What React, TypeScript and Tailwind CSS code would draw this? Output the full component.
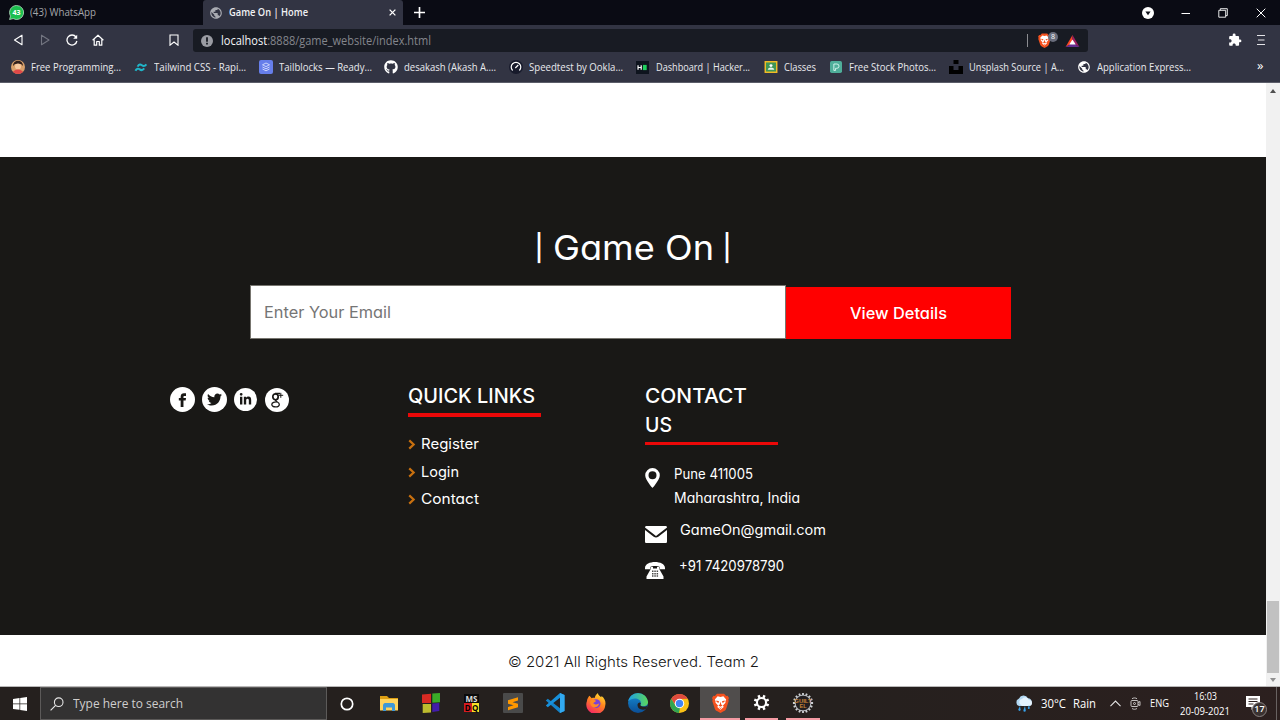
import { useLayoutEffect, useRef } from "react";
import type { ReactNode } from "react";
import { FaGithub, FaTwitter, FaLinkedinIn } from "react-icons/fa";
import { MdPublic, MdExtension } from "react-icons/md";

type FitProps = { w: number; className?: string; children: ReactNode };

/* Single line of text whose glyphs are stretched so it spans exactly `w` pixels. */
function Fit({ w, className = "", children }: FitProps) {
  const ref = useRef<HTMLSpanElement>(null);
  useLayoutEffect(() => {
    const fit = () => {
      const el = ref.current;
      if (!el || !el.offsetWidth) return;
      el.style.transform = "none";
      el.style.transform = `scaleX(${w / el.getBoundingClientRect().width})`;
    };
    fit();
    document.fonts?.ready.then(fit);
  }, [w]);
  return (
    <span className={`block shrink-0 whitespace-nowrap text-left ${className}`} style={{ width: w }}>
      <span ref={ref} className="inline-block origin-left">{children}</span>
    </span>
  );
}

function BraveLion({ className }: { className: string }) {
  return (
    <svg viewBox="0 0 24 28" className={className}>
      <path d="M7 1h10l3 3 2-.3L24 7l-1 2 .6 2-3.6 11c-.5 1.600-1.700 2.500-3 3.300L12 28l-5-2.700c-1.300-.8-2.500-1.700-3-3.300L.4 11 1 9 0 7l2-3.300L4 4z" fill="#f4511e" />
      <path d="M12 5.500l4-1 4 4.500-1 2.500 0 2-3.500 4 1 2-4.500 4-4.500-4 1-2L5 13.500v-2L4 9l4-4.500z" fill="#fff" />
      <path d="M6 10.500l4 1.200-1 2.300-2.700-1.600zM18 10.500l-4 1.200 1 2.300 2.700-1.600zM12 12l1 4 2 1.500-3 1.800-3-1.800 2-1.500zM9.500 19.800L12 21l2.500-1.200L12 22.500z" fill="#f4511e" />
    </svg>
  );
}

function Bookmark({ icon, w, tw, children }: { icon: ReactNode; w: string; tw: number; children: string }) {
  return (
    <div className={`flex shrink-0 items-center ${w}`}>
      <span className="flex w-5 shrink-0">{icon}</span>
      <Fit w={tw} className="text-[11px] text-[#e9eaee]">{children}</Fit>
    </div>
  );
}

function TabStrip() {
  return (
    <div className="flex h-[25px] items-center bg-[#0a0b14]">
      <div className="flex h-full w-[203px] items-center pl-[9px]">
        <svg viewBox="0 0 16 16" className="mr-[6px] size-[15px]">
          <path d="M8 .5a7.500 7.500 0 1 1-3.600 14L.6 15.500l1-3.700A7.500 7.500 0 0 1 8 .5z" fill="#1dbf4f" stroke="#d7f6df" strokeWidth=".7" />
          <text x="8" y="10.800" fontSize="7.500" fontWeight="700" textAnchor="middle" fill="#fff" fontFamily="Open Sans">43</text>
        </svg>
        <Fit w={66} className="text-[11px] text-[#a5a6aa]">(43) WhatsApp</Fit>
      </div>
      <div className="flex h-full w-[200px] items-center rounded-t-[3px] bg-[#323443] pl-[6px]">
        <MdPublic className="size-[14px] text-[#a9abb2]" />
        <Fit w={79} className="ml-[6px] text-[11px] font-semibold text-[#f1f1f4]">Game On | Home</Fit>
        <svg viewBox="0 0 8 8" className="ml-[81px] size-[7px]" stroke="#fff" strokeWidth="1.500"><path d="M.7.7l6.600 6.600M7.300.7L.7 7.300" /></svg>
      </div>
      <svg viewBox="0 0 10 10" className="ml-[11px] size-[11px]" stroke="#fff" strokeWidth="1.500"><path d="M5 0v10M0 5h10" /></svg>
      <div className="ml-auto flex items-center pr-[14px]">
        <svg viewBox="0 0 12 12" className="mr-[27px] size-3"><circle cx="6" cy="6" r="6" fill="#fff" /><path d="M3.400 4.500h5.200L6 8.200z" fill="#11121b" /></svg>
        <svg viewBox="0 0 10 10" className="mr-[27px] size-[10px]" stroke="#fff"><path d="M.5 5.500h8.500" /></svg>
        <svg viewBox="0 0 10 10" className="mr-[28px] size-[10px]" fill="none" stroke="#fff" strokeWidth=".9"><path d="M.8 2.300h6.900v6.900H.8zM2.300 2.300V.7h7v6.900H7.700" /></svg>
        <svg viewBox="0 0 10 10" className="size-[10px]" stroke="#fff" strokeWidth="1"><path d="M.7.7l8.600 8.600M9.300.7L.7 9.300" /></svg>
      </div>
    </div>
  );
}

function Toolbar() {
  return (
    <div className="flex h-[30px] items-center bg-[#323443]">
      <div className="flex w-[193px] items-center pl-[13px]">
        <svg viewBox="0 0 12 12" className="size-[12px]" fill="none" stroke="#fff" strokeWidth="1.100" strokeLinejoin="round"><path d="M9 1.200v9.600L1.500 6z" /></svg>
        <svg viewBox="0 0 12 12" className="ml-[14px] size-[12px]" fill="none" stroke="#737580" strokeWidth="1.100" strokeLinejoin="round"><path d="M2.500 1.200v9.600L10 6z" /></svg>
        <svg viewBox="0 0 12 12" className="ml-[15px] size-[12px]" fill="none" stroke="#fff" strokeWidth="1.300"><path d="M10 3A5 5 0 1 0 10.900 7" /><path d="M11.200.7v4H7.200z" fill="#fff" stroke="none" /></svg>
        <svg viewBox="0 0 12 12" className="ml-[14px] size-[12px]" fill="none" stroke="#fff" strokeWidth="1.200" strokeLinejoin="round"><path d="M.6 6.200L6 1.200l5.400 5M2.200 5.500v5.700h2.500V7.500h2.600v3.700h2.500V5.500" /></svg>
        <svg viewBox="0 0 12 12" className="ml-[64px] size-[12px]" fill="none" stroke="#fff" strokeWidth="1.100"><path d="M2 1h8v10.200L6 8l-4 3.200z" /></svg>
      </div>
      <div className="mt-px flex h-[23px] w-[895px] items-center rounded-[3px] bg-[#181b23] pl-[8px]">
        <svg viewBox="0 0 12 12" className="mr-[8px] size-3"><circle cx="6" cy="6" r="6" fill="#9a9ca3" /><path d="M5.100 2.200h1.800v4.600H5.100zM5.100 7.800h1.800v1.800H5.100z" fill="#181b23" /></svg>
        <Fit w={210} className="text-[12px] text-[#84868d]"><span className="text-[#f6f6f8]">localhost</span>:8888/game_website/index.html</Fit>
        <div className="ml-[596px] h-[13px] w-px bg-[#8b8c91]" />
        <div className="relative ml-[10px] flex">
          <BraveLion className="h-[15px] w-[13px]" />
          <span className="absolute top-[-1px] left-[10px] flex size-[10px] items-center justify-center rounded-full bg-[#686c7b] text-[7px] text-white">8</span>
        </div>
        <svg viewBox="0 0 15 13" className="ml-[14px] h-[12px] w-[15px]"><path d="M7.500 0L0 13l7.500-4.500z" fill="#ff4724" /><path d="M7.500 0L15 13 7.500 8.500z" fill="#9e1f63" /><path d="M0 13h15L7.500 8.500z" fill="#662d91" /><path d="M7.500 4.800L11 10.300H4z" fill="#fff" /></svg>
      </div>
      <MdExtension className="ml-[140px] size-[14px] text-white" />
      <svg viewBox="0 0 8 12" className="ml-[15px] h-[12px] w-[8px]" stroke="#e4e4e8" strokeWidth="1.100"><path d="M0 1.500h8M1 6h6.500M0 10.500h8" /></svg>
    </div>
  );
}

function Bookmarks() {
  return (
    <div className="flex h-[28px] items-center border-b border-[#5b5d69] bg-[#323443] pb-[3px] pl-[11px]">
      <Bookmark w="w-[123px]" tw={90} icon={
        <svg viewBox="0 0 14 14" className="size-[14px]"><defs><clipPath id="face"><circle cx="7" cy="7" r="7" /></clipPath></defs><g clipPath="url(#face)"><path d="M0 0h14v14H0z" fill="#d8a06a" /><path d="M2 6c0-7 10-7 10 0L10 4H4z" fill="#31201c" /><circle cx="7" cy="6.500" r="3" fill="#f6c9a0" /><path d="M1 14c1-6 11-6 12 0z" fill="#e04848" /></g></svg>
      }>Free Programming...</Bookmark>
      <Bookmark w="w-[125px]" tw={92} icon={
        <svg viewBox="0 0 14 10" className="mt-px h-[9px] w-[14px]" fill="none" stroke="#20b5c9" strokeWidth="2.200"><path d="M3.200 4C4.800.8 6.700 1.500 8 2.500s3 1.500 5-1M.8 8.600C2.400 5.400 4.300 6.100 5.600 7.100s3 1.500 5-1" /></svg>
      }>Tailwind CSS - Rapi...</Bookmark>
      <Bookmark w="w-[125px]" tw={93} icon={
        <svg viewBox="0 0 14 14" className="size-[14px]"><rect width="14" height="14" rx="2" fill="#667eea" /><path d="M7 3l3.500 1.800L7 6.600 3.500 4.800zM3.500 7L7 8.800 10.500 7M3.500 9L7 10.800 10.500 9" fill="none" stroke="#e5eaff" strokeWidth=".8" /></svg>
      }>Tailblocks — Ready...</Bookmark>
      <Bookmark w="w-[125px]" tw={92} icon={<FaGithub className="size-[14px] text-white" />}>desakash (Akash A....</Bookmark>
      <Bookmark w="w-[127px]" tw={94} icon={
        <svg viewBox="0 0 14 14" className="size-[14px]"><circle cx="7" cy="7" r="7" fill="#171a2b" /><path d="M3.600 10.500a4.800 4.800 0 1 1 6.800 0M6.300 8l3-3" fill="none" stroke="#fff" strokeWidth="1.200" /></svg>
      }>Speedtest by Ookla...</Bookmark>
      <Bookmark w="w-[128px]" tw={94} icon={
        <svg viewBox="0 0 14 14" className="size-[13px]"><path d="M0 0h14v14H0z" fill="#0e141e" /><path d="M2.200 4.500v5M5.600 4.500v5M2.200 7h3.400" stroke="#fff" strokeWidth="1.300" /><path d="M7.500 4.200h4v5.600h-4z" fill="#1fd05e" /></svg>
      }>Dashboard | Hacker...</Bookmark>
      <Bookmark w="w-[65px]" tw={32} icon={
        <svg viewBox="0 0 14 13" className="h-[12px] w-[14px]"><path d="M0 0h14v13H0z" fill="#f1bb25" /><path d="M1.600 1.600h10.800v9.800H1.600z" fill="#3f9656" /><circle cx="7" cy="5" r="1.600" fill="#fff" /><path d="M3.500 9.500c.3-3.300 6.700-3.300 7 0z" fill="#e5f3e7" /></svg>
      }>Classes</Bookmark>
      <Bookmark w="w-[120px]" tw={87} icon={
        <svg viewBox="0 0 14 14" className="ml-px size-[12px]"><rect width="14" height="14" rx="2" fill="#4fae9a" /><path d="M4.500 11V3.500H8a2.500 2.500 0 0 1 0 5H6.500V11z" fill="none" stroke="#e3fbf5" strokeWidth="1" /></svg>
      }>Free Stock Photos...</Bookmark>
      <Bookmark w="w-[128px]" tw={95} icon={
        <svg viewBox="0 0 14 14" className="size-[14px]"><path d="M4.500 0h5v4h-5zM0 6h4.500v4h5V6H14v8H0z" fill="#000" /></svg>
      }>Unsplash Source | A...</Bookmark>
      <Bookmark w="w-[180px]" tw={94} icon={<MdPublic className="size-[14px] text-white" />}>Application Express...</Bookmark>
      <span className="-mt-1 text-[13px] leading-none text-white">»</span>
    </div>
  );
}

function SocialLinks() {
  return (
    <div className="flex h-[25px] w-[238px] items-center">
      <span className="flex size-[25px] items-center justify-center rounded-full bg-white">
        <svg viewBox="0 0 10 16" className="h-[14px] w-[9px]"><path d="M9 .3v3H7.300c-.9 0-1.200.4-1.200 1.200v1.300H9l-.4 2.900H6.100V16H2.900V8.700H.8V5.800h2.100V4C2.900 1.500 4.400.2 6.700.2z" fill="#191816" /></svg>
      </span>
      <span className="ml-[7px] flex size-[25px] items-center justify-center rounded-full bg-white text-[#191816]"><FaTwitter className="size-[15px]" /></span>
      <span className="ml-[7px] flex size-[23px] items-center justify-center rounded-full bg-white text-[#191816]"><FaLinkedinIn className="mb-px size-[13px]" /></span>
      <span className="ml-[8px] flex size-[24px] items-center justify-center rounded-full bg-white">
        <svg viewBox="0 0 14 16" className="h-[16px] w-[14px]" fill="none" stroke="#191816"><ellipse cx="5.500" cy="4.800" rx="2.700" ry="3" strokeWidth="1.700" /><path d="M5 1.500h5M6.800 7.500C3 9 9.300 9.700 9.300 12.200 9.300 15.800 1.800 15.800 1.800 12.500c0-2 3-2.700 5-2.500" strokeWidth="1.300" /><path d="M10.800.8v5M8.500 3.300h4.700" strokeWidth="1" /></svg>
      </span>
    </div>
  );
}

function QuickLink({ w, children }: { w: number; children: string }) {
  return (
    <li className="flex h-[27.700px] items-center">
      <svg viewBox="0 0 8 12" className="mt-px mr-[5px] h-[11px] w-[8px]" fill="none" stroke="#c8700f" strokeWidth="2.400"><path d="M1 1.500L5.800 6 1 10.500" /></svg>
      <Fit w={w} className="text-[14.500px]">{children}</Fit>
    </li>
  );
}

function Page() {
  return (
    <main className="w-[1266px] bg-white font-[Inter,sans-serif] [font-feature-settings:'cv11']">
      <div className="h-[73.500px]" />
      <footer className="h-[478.500px] bg-[#191816] pt-[66px] text-white">
        <h1 className="flex h-[50px] items-center justify-center text-[34px] leading-none">
          <span className="mr-[9px] text-[26px] font-medium">|</span>
          <Fit w={161}>Game On</Fit>
          <span className="ml-[9px] text-[26px] font-medium">|</span>
        </h1>
        <form className="mt-[12.500px] ml-[250px] flex h-[54px] w-[761px] items-center">
          <div className="flex h-[54px] w-[536px] items-center border border-[#77756f] bg-white pl-[13px]">
            <Fit w={127} className="text-[16px] text-[#757575]">Enter Your Email</Fit>
          </div>
          <button type="button" className="mt-px flex h-[52px] w-[225px] items-center justify-center bg-[#ff0000]">
            <Fit w={97} className="text-[16px] font-medium">View Details</Fit>
          </button>
        </form>
        <div className="mt-[43px] flex pl-[170px]">
          <div className="pt-[5px]"><SocialLinks /></div>
          <section className="w-[237px]">
            <h2 className="flex h-[34.500px] w-[133px] items-start border-b-[4px] border-[#ea0808] text-[20.500px] leading-[28px] font-medium">
              <Fit w={127}>QUICK LINKS</Fit>
            </h2>
            <ul className="mt-[13.500px]">
              <QuickLink w={58}>Register</QuickLink>
              <QuickLink w={38}>Login</QuickLink>
              <QuickLink w={58}>Contact</QuickLink>
            </ul>
          </section>
          <section className="w-[200px]">
            <h2 className="h-[63px] w-[133px] border-b-[3px] border-[#ea0808] text-[20.500px] leading-[28.500px] font-medium">
              <Fit w={102}>CONTACT</Fit>
              <Fit w={27}>US</Fit>
            </h2>
            <div className="mt-[17px] flex text-[14px] leading-[24px]">
              <svg viewBox="0 0 15 20" className="mt-[6px] mr-[14px] h-[20px] w-[15px]"><path fillRule="evenodd" d="M7.500 0A7.300 7.300 0 0 0 .2 7.300C.2 12 7.500 20 7.500 20s7.300-8 7.300-12.700A7.300 7.300 0 0 0 7.500 0zm0 3.200a4 4 0 1 1 0 8 4 4 0 0 1 0-8z" fill="#fff" /></svg>
              <address className="not-italic">
                <Fit w={79}>Pune 411005</Fit>
                <Fit w={126}>Maharashtra, India</Fit>
              </address>
            </div>
            <div className="mt-[8px] flex text-[14px] leading-[24px]">
              <svg viewBox="0 0 22 17" className="mt-[8px] mr-[13px] h-[17px] w-[22px]"><path d="M1.500 0h19c1 0 1.500.6 1.500 1.500L11 10 0 1.500C0 .6.600 0 1.500 0zM0 4l8.700 6.800c1.400 1 3.200 1 4.600 0L22 4v11.500c0 1-.6 1.500-1.500 1.500h-19C.6 17 0 16.500 0 15.500z" fill="#fff" /></svg>
              <Fit w={146}>GameOn@gmail.com</Fit>
            </div>
            <div className="mt-[11px] flex text-[14px] leading-[24px]">
              <svg viewBox="0 0 20 17" className="mt-[8px] mr-[14px] h-[17px] w-[20px]"><path d="M0 6C0-2 20-2 20 6v1.200h-5.500V4.700c-2-1-7-1-9 0v2.500H0z" fill="#fff" /><path d="M6 5h2v1.500h4V5h2v1.500l4.500 8V17h-17v-2.500l4.500-8z" fill="#fff" /><path d="M7 8.500h1.500V10H7zM9.300 8.500h1.500V10H9.300zM11.600 8.500h1.500V10h-1.500zM7 10.900h1.500v1.500H7zM9.300 10.900h1.500v1.500H9.300zM11.600 10.900h1.500v1.500h-1.500zM7 13.300h1.500v1.500H7zM9.300 13.300h1.500v1.500H9.300zM11.600 13.300h1.500v1.500h-1.500z" fill="#4b4a49" /></svg>
              <Fit w={105}>+91 7420978790</Fit>
            </div>
          </section>
        </div>
      </footer>
      <div className="flex h-[51px] items-center justify-center pt-[2px] text-[14.500px] font-light text-[#161616]">
        <Fit w={251}>© 2021 All Rights Reserved. Team 2</Fit>
      </div>
    </main>
  );
}

function Scrollbar() {
  return (
    <div className="flex w-[14px] flex-col items-center bg-[#f1f1f1]">
      <svg viewBox="0 0 6 4" className="mt-[6px] h-[4px] w-[6px]"><path d="M0 4l3-4 3 4z" fill="#505050" /></svg>
      <div className="mt-[508px] h-[72px] w-[12px] bg-[#c1c1c1]" />
      <svg viewBox="0 0 6 4" className="mt-[5px] h-[4px] w-[6px]"><path d="M0 0h6L3 4z" fill="#909090" /></svg>
    </div>
  );
}

function TaskSlot({ children, className = "" }: { children: ReactNode; className?: string }) {
  return <div className={`flex h-full shrink-0 items-center justify-center ${className}`}>{children}</div>;
}

function GearTeeth({ count, fill }: { count: number; fill: string }) {
  return (
    <>
      {Array.from({ length: count }, (_, i) => (
        <rect key={i} x="10.300" y="1" width="3.400" height="4" fill={fill} transform={`rotate(${(360 / count) * (i + 0.5)} 12 12)`} />
      ))}
    </>
  );
}

function Taskbar() {
  return (
    <div className="flex h-[34px] items-center border-t border-[#b9b8b8] bg-[linear-gradient(90deg,#25201e_0%,#25201e_65%,#2c201f_100%)]">
      <TaskSlot className="w-[40px]">
        <svg viewBox="0 0 14 14" className="size-[14px]" fill="#fff"><path d="M0 2l6.500-.9v5.500H0zM7.200 1L14 0v6.600H7.200zM0 7.300h6.500v5.500L0 12zM7.200 7.300H14V14l-6.800-1z" /></svg>
      </TaskSlot>
      <div className="flex h-full w-[287px] items-center border border-[#5c5a59] bg-[#333232] pl-[9px]">
        <svg viewBox="0 0 14 14" className="mr-[9px] size-[14px]" fill="none" stroke="#e7e7e7" strokeWidth="1.100"><circle cx="8.700" cy="5.200" r="4.300" /><path d="M5.600 8.300L.6 13.300" /></svg>
        <Fit w={110} className="pt-px text-[12.500px] text-[#cfcece]">Type here to search</Fit>
      </div>
      <TaskSlot className="w-[39px]">
        <svg viewBox="0 0 14 14" className="size-[14px]"><circle cx="7" cy="7" r="5.700" fill="none" stroke="#fff" strokeWidth="1.700" /></svg>
      </TaskSlot>
      <TaskSlot className="w-[45px] pb-px">
        <svg viewBox="0 0 18 16" className="h-[16px] w-[18px]"><path d="M0 1h7l2 2h9v12H0z" fill="#dd9f13" /><path d="M0 4h18v11.500H0z" fill="#ffd35c" /><path d="M3 16v-5.500C3 9 4 8 5 8h8c1 0 2 1 2 2.500V16h-3v-3.500H6V16z" fill="#3e98d7" /></svg>
      </TaskSlot>
      <TaskSlot className="w-[40px] pb-px">
        <svg viewBox="0 0 18 20" className="h-[20px] w-[18px]"><path d="M0 1.500L9 .700V10H0z" fill="#d82a23" /><path d="M10.300.6L18 0v9.200l-7.700.6z" fill="#3aab28" /><path d="M.7 11H9v8.500l-8.300.5z" fill="#bdbb2e" /><path d="M10.300 10.500l7-.5v8l-7 1z" fill="#421caa" /></svg>
      </TaskSlot>
      <TaskSlot className="w-[41px] pb-px">
        <div className="flex w-[15px] flex-col text-center text-[8px] leading-[9px] font-bold">
          <span className="bg-[#0b0b0b] text-[#dedede]">MS</span>
          <span className="flex"><span className="w-2 bg-[#d51b20] text-black">D</span><span className="w-2 bg-[#f6df26] text-black">Q</span></span>
        </div>
      </TaskSlot>
      <TaskSlot className="w-[42px] pb-px">
        <svg viewBox="0 0 20 20" className="size-[20px]"><rect width="20" height="20" rx="1" fill="#4a4a4a" /><path d="M15 4.200v3.300L9.500 9.300l5.500 1.500v3.500l-10 3v-3.300l5.500-1.700L5 10.700V7.200z" fill="#ff9800" /></svg>
      </TaskSlot>
      <TaskSlot className="w-[41px] pb-px">
        <svg viewBox="0 0 20 20" className="size-[20px]"><path d="M15 0l4.500 2v16L15 20 .8 7.600l2-1.800L15 15.200z" fill="#1583c9" /><path d="M15 0v4.800L2.800 14.200l-2-1.800z" fill="#1790db" /><path d="M15 0l4.500 2v16L15 20z" fill="#32a9f0" /></svg>
      </TaskSlot>
      <TaskSlot className="w-[42px] pb-px">
        <svg viewBox="0 0 20 20" className="size-[20px]"><defs><linearGradient id="ff" x1=".8" y1="0" x2=".3" y2="1"><stop stopColor="#ffe534" /><stop offset=".45" stopColor="#ff851e" /><stop offset="1" stopColor="#f52665" /></linearGradient></defs><path d="M3.500 2.700l2.200 2.500c1-.4 2-.5 3-.2C9 2.800 10.500 1 12 0c-.2 2 2 3 3.300 4.300l.2-1.300C19 5.500 20 9 19.300 12A9.500 9.500 0 1 1 1 8c0-2 1.300-4 2.500-5.300z" fill="url(#ff)" /><circle cx="10.200" cy="10.600" r="4.300" fill="#7842d7" /><path d="M4.500 7.500c2-1.200 4-.5 5.500.2 0 1.300-2 1.300-2.700 2.500 1.200 1.300 4 2 6-.2-.5 4-4.500 5.500-7.300 3.500-1.700-1.300-2.300-4-1.500-6z" fill="#ff8a22" /></svg>
      </TaskSlot>
      <TaskSlot className="w-[41px] pb-px">
        <svg viewBox="0 0 20 20" className="size-[20px]"><defs><linearGradient id="ea"><stop stopColor="#1d9ee7" /><stop offset="1" stopColor="#5bd85a" /></linearGradient><linearGradient id="eb" x2="0" y2="1"><stop stopColor="#168cd4" /><stop offset="1" stopColor="#0b4d94" /></linearGradient></defs><circle cx="10" cy="10" r="10" fill="url(#eb)" /><path d="M.2 8.500C2-2.500 18-2.500 20 8.700c.4 3.800-3.800 5.300-7 4.200-1.300-.5.2-1.300 0-3C12.700 5.500 5 3.500.2 8.500z" fill="url(#ea)" /><path d="M12.500 12.600c1.500 1.500 5 1.600 7 .2l-1.300 3.200c-3.500 1.500-8.700.5-8.700-4 0-1.500 1-2.500 2.500-2.500 1 .5 1 2-.1 2.300z" fill="#25201e" /></svg>
      </TaskSlot>
      <TaskSlot className="w-[42px] pb-px">
        <svg viewBox="0 0 20 20" className="size-[19px]"><circle cx="10" cy="10" r="10" fill="#fbc116" /><path d="M1.340 5A10 10 0 0 1 18.660 5L10 5.200 6 12z" fill="#df4b3e" /><path d="M1.340 5L6 12.500l4.500 2.300L9.500 20A10 10 0 0 1 1.340 5z" fill="#30a552" /><circle cx="10" cy="10" r="5" fill="#fff" /><circle cx="10" cy="10" r="3.900" fill="#4285f4" /></svg>
      </TaskSlot>
      <TaskSlot className="w-[40px] border-b-2 border-[#f59ba4] bg-[#504d4c]"><BraveLion className="h-[20px] w-[17px]" /></TaskSlot>
      <TaskSlot className="ml-[5px] w-[33px] border-b-2 border-[#f59ba4]">
        <svg viewBox="0 0 24 24" className="size-[17px]"><GearTeeth count={8} fill="#fff" /><circle cx="12" cy="12" r="6.400" fill="none" stroke="#fff" strokeWidth="2.900" /></svg>
      </TaskSlot>
      <TaskSlot className="ml-[8px] w-[34px] border-b-2 border-[#f59ba4]">
        <svg viewBox="0 0 24 24" className="size-[22px]"><path d="M12 1v22M1 12h22M4.200 4.200l15.600 15.600M19.800 4.200L4.200 19.800M7.800 1.800l8.400 20.400M16.200 1.800L7.800 22.200M1.800 7.800l20.400 8.400M1.800 16.200l20.400-8.400" stroke="#cdd0d4" strokeWidth="2" /><circle cx="12" cy="12" r="8.600" fill="#221e20" stroke="#c4c8ce" strokeWidth="1" /><text x="12" y="12" fontSize="6.500" fontWeight="700" textAnchor="middle" fill="#c58439" fontFamily="Liberation Sans">GUILT</text><text x="12" y="17.500" fontSize="6" fontWeight="700" textAnchor="middle" fill="#c58439" fontFamily="Liberation Sans">EL</text></svg>
      </TaskSlot>
      <div className="ml-auto flex h-full items-center text-white">
        <svg viewBox="0 0 18 17" className="mr-[8px] h-[17px] w-[18px]"><path d="M4 11a4 4 0 0 1 0-7.500 5 5 0 0 1 9-.3A4 4 0 0 1 14 11z" fill="#b2d8f3" /><path d="M5 9a3 3 0 0 1 2-5 4 4 0 0 1 7 1 3 3 0 0 1 0 6H7z" fill="#e4f2fd" /><path d="M5 11l-1.500 3a1.200 1.200 0 1 0 2 0zM10 11l-1.500 4a1.200 1.200 0 1 0 2.200 0zM14 10l-1.200 3a1 1 0 1 0 2 0z" fill="#37a2ec" /></svg>
        <Fit w={25} className="mr-[7px] pt-px text-[12.500px]">30°C</Fit>
        <Fit w={23} className="mr-[14px] pt-px text-[12.500px]">Rain</Fit>
        <svg viewBox="0 0 12 7" className="mr-[9px] h-[7px] w-[11px]" fill="none" stroke="#e8e8e8" strokeWidth="1.100"><path d="M.5 6.300L6 .8l5.500 5.500" /></svg>
        <svg viewBox="0 0 11 13" className="mr-[9px] h-[13px] w-[11px]" fill="none" stroke="#d5d2d1" strokeWidth=".9"><rect x="1" y="3.500" width="7" height="6" rx="1" /><path d="M8 5.500l2-1v4l-2-1M2 1.700c1.500-1 3.500-1 5 0M2 11.500c1.500 1 3.500 1 5 0" /><circle cx="4.500" cy="6.500" r="1" /></svg>
        <Fit w={19} className="mr-[11px] pt-px text-[10.500px]">ENG</Fit>
        <div className="mr-[16px] flex flex-col items-center text-[10.500px] leading-[15px]">
          <Fit w={23}>16:03</Fit>
          <Fit w={50}>20-09-2021</Fit>
        </div>
        <div className="relative mr-[9px] h-[22px] w-[21px]">
          <svg viewBox="0 0 14 14" className="mt-[3px] h-[14px] w-[14px]"><path d="M0 0h14v11H8l-2.500 3v-3H0z" fill="#fff" /><path d="M2.500 3h9M2.500 5.500h9M2.500 8h5" stroke="#2c201f" /></svg>
          <span className="absolute top-[9px] left-[6px] flex size-[15px] items-center justify-center rounded-full border border-[#87807e] bg-[#3a3231] text-[9px] font-semibold">17</span>
        </div>
        <div className="mr-[3px] h-full w-px bg-[#686261]" />
      </div>
    </div>
  );
}

export default function App() {
  return (
    <div className="flex h-[720px] w-[1280px] flex-col overflow-hidden bg-white font-[Open_Sans,sans-serif]">
      <TabStrip />
      <Toolbar />
      <Bookmarks />
      <div className="flex h-[603px] shrink-0"><Page /><Scrollbar /></div>
      <Taskbar />
    </div>
  );
}
